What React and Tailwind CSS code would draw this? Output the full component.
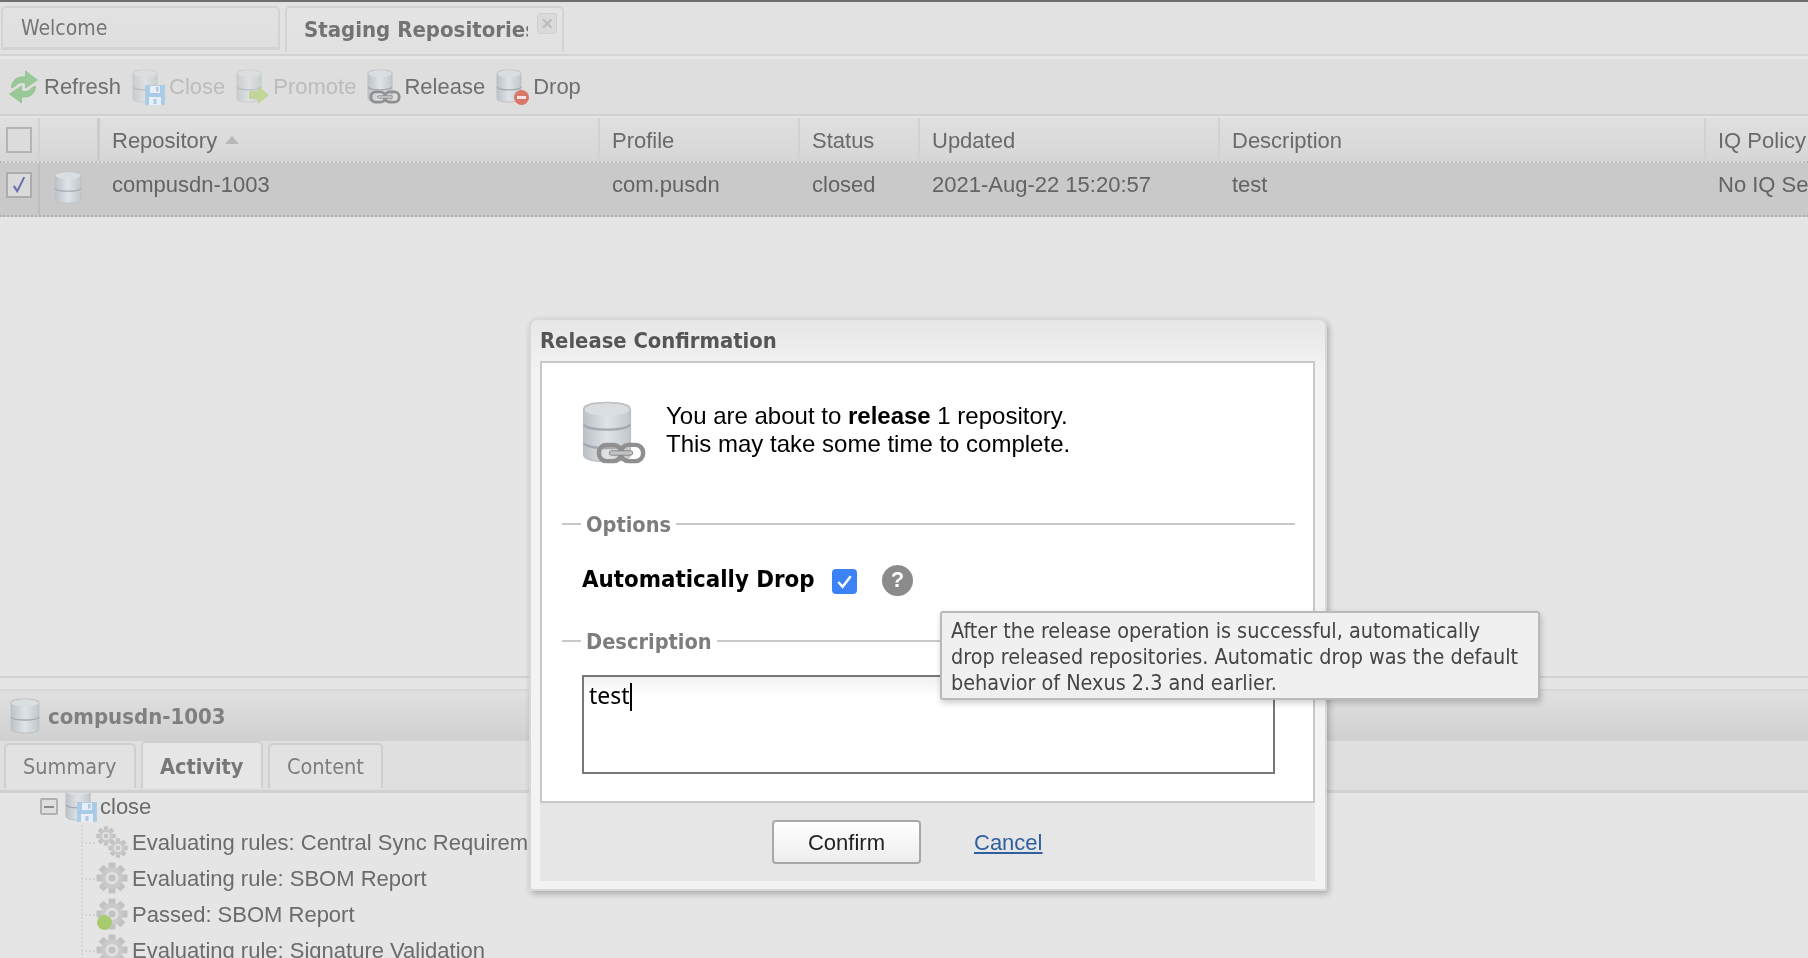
import React, { useId } from "react";

const tahoma = "font-['DejaVu_Sans',sans-serif] font-stretch-condensed";

function Db({ tiers = 2, className = "", opacity = 1 }) {
  const id = useId();
  const h = 32 / tiers;
  return (
    <svg viewBox="0 0 28 36" className={className} opacity={opacity} preserveAspectRatio="none">
      <defs>
        <linearGradient id={id} x1="0" x2="1" y1="0" y2="0">
          <stop offset="0" stopColor="#bcc2c8" />
          <stop offset="0.5" stopColor="#dfe3e6" />
          <stop offset="1" stopColor="#c1c7cc" />
        </linearGradient>
      </defs>
      <path d="M1 5C1 2 7 1 14 1s13 1 13 4v26c0 3-6 4-13 4S1 34 1 31Z" fill={`url(#${id})`} stroke="#bcc1c5" strokeWidth="1" />
      <ellipse cx="14" cy="5" rx="12.5" ry="3.6" fill="#dadee1" />
      {Array.from({ length: tiers - 1 }).map((_, i) => (
        <path key={i} d={`M1 ${3 + h * (i + 1)}c2 4 24 4 26 0`} fill="none" stroke="#a3a9af" strokeWidth="1.3" />
      ))}
    </svg>
  );
}

function Chain({ className = "" }) {
  return (
    <svg viewBox="0 0 34 16" className={className}>
      <rect x="2" y="2.5" width="15" height="11" rx="5" fill="none" stroke="#8f8f8f" strokeWidth="3" />
      <rect x="17" y="2.5" width="15" height="11" rx="5" fill="none" stroke="#8f8f8f" strokeWidth="3" />
      <rect x="9" y="6.5" width="16" height="3" rx="1.5" fill="#c4c4c4" stroke="#7f7f7f" strokeWidth="0.6" />
    </svg>
  );
}

function Floppy({ className = "" }) {
  return (
    <svg viewBox="0 0 20 20" className={className}>
      <rect x="0.5" y="0.5" width="19" height="19" fill="#a8cbe8" stroke="#b2cce0" />
      <rect x="5" y="1" width="10" height="7" fill="#e8eef3" />
      <rect x="11" y="2" width="2.5" height="4.5" fill="#a8cbe8" />
      <rect x="4" y="12" width="12" height="8" fill="#e8eef3" />
      <rect x="8.5" y="14" width="3" height="5" fill="#a8cbe8" />
    </svg>
  );
}

function Refresh({ className = "" }) {
  return (
    <svg viewBox="0 0 32 36" className={className}>
      <g fill="#98c997" stroke="#86b985" strokeWidth="0.6">
        <path d="M4 19C4 11 10 7 18 8V2l12 9-12 8v-5c-5-1-8 0-10 3Z" />
        <path d="M28 17c0 8-6 12-14 11v6L2 25l12-8v5c5 1 8 0 10-3Z" />
      </g>
    </svg>
  );
}

function Gear({ className = "" }) {
  const teeth = [0, 45, 90, 135, 180, 225, 270, 315];
  return (
    <svg viewBox="0 0 32 32" className={className}>
      {teeth.map((a) => (
        <rect key={a} x="12.5" y="0.5" width="7" height="8" rx="1" fill="#c2c2c2" transform={`rotate(${a} 16 16)`} />
      ))}
      <circle cx="16" cy="16" r="11" fill="#c9c9c9" />
      <circle cx="16" cy="16" r="6.5" fill="#e0e0e0" />
      <circle cx="16" cy="16" r="3.5" fill="#c2c2c2" />
    </svg>
  );
}

function ToolBtn({ icon, label, disabled }) {
  return (
    <div className="flex items-center">
      <div className="relative w-[33px] h-[36px] mr-[4px] shrink-0">{icon}</div>
      <span className={disabled ? "text-[#bcbcbc]" : "text-[#6f6f6f]"}>{label}</span>
    </div>
  );
}

function HeadCell({ w, children }) {
  return (
    <div className={`${w} h-full shrink-0 flex items-center pl-[12px] pt-[1px] border-r-2 border-[#d2d2d2] whitespace-nowrap overflow-hidden`}>
      {children}
    </div>
  );
}

function RowCell({ w, children }) {
  return <div className={`${w} shrink-0 pl-[12px] pt-[5px] whitespace-nowrap overflow-hidden`}>{children}</div>;
}

function Legend({ label, className = "" }) {
  return (
    <div className={`flex items-start h-[28px] ${className}`}>
      <div className="w-[19px] h-[2px] bg-[#c9c9c9] mt-[12px]" />
      <span className={`${tahoma} font-bold text-[21.6px] leading-[28px] text-[#7d7d7d] pl-[5px] pr-[5px]`}>{label}</span>
      <div className="flex-1 h-[2px] bg-[#c9c9c9] mt-[12px]" />
    </div>
  );
}

function TreeRow({ icon, children }) {
  return (
    <div className="flex items-center h-[36px] pl-[96px] relative">
      <div className="absolute left-[81px] top-1/2 w-[14px] border-t-2 border-dotted border-[#d4d4d4]" />
      <div className="w-[32px] h-[32px] shrink-0 mr-[4px] relative">{icon}</div>
      <span className="whitespace-nowrap">{children}</span>
    </div>
  );
}

export default function App() {
  return (
    <div className="relative w-[1808px] h-[958px] overflow-hidden bg-[#e5e5e5] font-['Liberation_Sans',Arial,sans-serif] text-[22px] text-[#6a6a6a]">
      <div className="blur-[0.4px]">
        <div className="h-[2px] bg-[#6e6e6e]" />

        {/* tab strip */}
        <div className="h-[54px] bg-[#e2e2e2] flex items-start pt-[4px] pl-[1px] gap-[5px] border-b-2 border-[#d4d4d4]">
          <div className={`w-[279px] h-[44px] flex items-center border-2 border-b-[3px] border-[#d3d3d3] rounded-t-[5px] bg-gradient-to-b from-[#e2e2e2] to-[#dfdfdf] pl-[18px] pt-[3px] text-[21px] text-[#757575] ${tahoma}`}>
            Welcome
          </div>
          <div className="relative w-[279px] h-[46px] flex items-center border-2 border-b-0 border-[#d3d3d3] rounded-t-[5px] bg-gradient-to-b from-[#e4e4e4] to-[#e1e1e1] pl-[17px] pb-[2px] overflow-hidden">
            <div className={`w-[224px] overflow-hidden whitespace-nowrap text-[22px] font-bold text-[#737373] ${tahoma}`}>Staging Repositories</div>
            <div className="absolute right-[5px] top-[5px] w-[20px] h-[21px] rounded-[3px] border border-[#cfcfcf] bg-[#dadada] flex items-center justify-center text-[15px] font-bold leading-none text-[#bdbdbd]">
              ✕
            </div>
          </div>
        </div>

        {/* toolbar */}
        <div className="mt-[2px] h-[58px] bg-[#dedede] border-t border-[#ececec] border-b-2 border-b-[#d0d0d0] flex items-center pl-[7px] gap-[11px]">
          <ToolBtn icon={<Refresh className="w-[33px] h-[36px]" />} label="Refresh" />
          <ToolBtn
            icon={<>
              <Db className="w-[26px] h-[34px]" opacity={0.6} />
              <Floppy className="absolute right-0 bottom-0 w-[20px] h-[20px]" />
            </>}
            label="Close"
            disabled
          />
          <ToolBtn
            icon={<>
              <Db className="w-[26px] h-[34px]" opacity={0.6} />
              <svg viewBox="0 0 20 18" className="absolute right-0 bottom-[1px] w-[20px] h-[18px]"><path d="M0 5h9V0l11 9-11 9v-5H0Z" fill="#c2d498" /></svg>
            </>}
            label="Promote"
            disabled
          />
          <ToolBtn
            icon={<>
              <Db className="w-[26px] h-[34px]" />
              <Chain className="absolute -right-[1px] bottom-0 w-[32px] h-[16px]" />
            </>}
            label="Release"
          />
          <ToolBtn
            icon={<>
              <Db className="w-[26px] h-[34px]" />
              <span className="absolute right-0 bottom-0 w-[15px] h-[15px] rounded-full bg-[#d9786a] flex items-center justify-center">
                <span className="w-[9px] h-[3px] bg-[#f2e4e2]" />
              </span>
            </>}
            label="Drop"
          />
        </div>

        {/* grid head */}
        <div className="mt-[2px] h-[45px] flex bg-gradient-to-b from-[#e0e0e0] to-[#d6d6d6] border-b-2 border-dotted border-[#bdbdbd]">
          <div className="w-[40px] h-full shrink-0 border-r-2 border-[#d2d2d2] flex items-center pl-[6px]">
            <div className="w-[26px] h-[26px] border-2 border-[#b4b4b4] bg-[#dcdcdc]" />
          </div>
          <div className="w-[60px] h-full shrink-0 border-r-[3px] border-[#cbcbcb]" />
          <HeadCell w="w-[500px]">
            Repository
            <svg viewBox="0 0 14 8" className="w-[14px] h-[8px] ml-[8px]"><path d="M7 0l7 8H0Z" fill="#b7b7b7" /></svg>
          </HeadCell>
          <HeadCell w="w-[200px]">Profile</HeadCell>
          <HeadCell w="w-[120px]">Status</HeadCell>
          <HeadCell w="w-[300px]">Updated</HeadCell>
          <HeadCell w="w-[486px]">Description</HeadCell>
          <div className="flex-1 h-full flex items-center pl-[12px] pt-[1px] whitespace-nowrap">IQ Policy</div>
        </div>

        {/* grid row */}
        <div className="h-[54px] flex bg-[#c9c9c9] border-b-2 border-dotted border-[#b2b2b2] text-[#636363]">
          <div className="w-[40px] shrink-0 border-r-2 border-[#bdbdbd] pl-[6px] pt-[9px]">
            <div className="w-[26px] h-[26px] border-2 border-[#acacac] bg-[#dadada] flex items-center justify-center">
              <svg viewBox="0 0 16 20" className="w-[14px] h-[18px]"><path d="M2 11l4 6L14 1" fill="none" stroke="#6a72ad" strokeWidth="2.4" /></svg>
            </div>
          </div>
          <div className="w-[60px] shrink-0 pl-[14px] pt-[8px]">
            <Db className="w-[28px] h-[33px]" />
          </div>
          <RowCell w="w-[500px]">compusdn-1003</RowCell>
          <RowCell w="w-[200px]">com.pusdn</RowCell>
          <RowCell w="w-[120px]">closed</RowCell>
          <RowCell w="w-[300px]">2021-Aug-22 15:20:57</RowCell>
          <RowCell w="w-[486px]">test</RowCell>
          <div className="flex-1 pl-[12px] pt-[5px] whitespace-nowrap overflow-hidden">No IQ Se</div>
        </div>

        {/* empty grid body */}
        <div className="h-[461px] border-b-2 border-[#d2d2d2]" />

        {/* detail panel */}
        <div className="mt-[11px] border-t-2 border-[#d6d6d6] h-[52px] bg-gradient-to-b from-[#e0e0e0] to-[#d0d0d0] flex items-center pl-[10px]">
          <Db className="w-[30px] h-[36px]" />
          <span className={`${tahoma} font-bold text-[22px] text-[#808080] ml-[8px]`}>compusdn-1003</span>
        </div>
        <div className="h-[52px] bg-[#dfdfdf] border-b-[3px] border-[#d1d1d1] flex items-end pl-[4px] pb-[2px] gap-[5px] text-[21.5px] text-[#7d7d7d]">
          <div className={`${tahoma} w-[132px] h-[45px] border-2 border-b-0 border-[#cfcfcf] rounded-t-[5px] bg-[#e2e2e2] pl-[17px] pt-[6px]`}>Summary</div>
          <div className={`${tahoma} w-[122px] h-[47px] border-2 border-b-0 border-[#cfcfcf] rounded-t-[5px] bg-[#e6e6e6] pl-[17px] pt-[8px] font-bold text-[#777777]`}>Activity</div>
          <div className={`${tahoma} w-[115px] h-[45px] border-2 border-b-0 border-[#cfcfcf] rounded-t-[5px] bg-[#e2e2e2] pl-[17px] pt-[6px]`}>Content</div>
        </div>

        {/* tree */}
        <div className="relative h-[170px] overflow-hidden text-[#6b6b6b]">
          <div className="absolute left-[81px] top-[32px] bottom-0 border-l-2 border-dotted border-[#d4d4d4]" />
          <div className="flex items-center h-[27px] pl-[40px]">
            <div className="w-[18px] h-[17px] border-2 border-[#b0b0b0] rounded-[2px] bg-[#dedede] flex items-center justify-center shrink-0">
              <span className="w-[10px] h-[2px] bg-[#8a8a8a]" />
            </div>
            <div className="relative w-[32px] h-[28px] ml-[7px] mr-[3px] shrink-0">
              <Db className="w-[26px] h-[34px] -mt-[6px]" />
              <Floppy className="absolute right-0 bottom-[-2px] w-[20px] h-[22px]" />
            </div>
            close
          </div>
          <div className="h-[4px]" />
          <TreeRow
            icon={<>
              <Gear className="absolute left-0 top-0 w-[20px] h-[20px]" />
              <Gear className="absolute right-0 bottom-0 w-[20px] h-[20px]" />
            </>}
          >
            Evaluating rules: Central Sync Requirements
          </TreeRow>
          <TreeRow icon={<Gear className="w-[32px] h-[32px]" />}>Evaluating rule: SBOM Report</TreeRow>
          <TreeRow
            icon={<>
              <Gear className="w-[32px] h-[32px]" />
              <span className="absolute left-[1px] bottom-0 w-[15px] h-[15px] rounded-full bg-[#a8cb70]" />
            </>}
          >
            Passed: SBOM Report
          </TreeRow>
          <TreeRow icon={<Gear className="w-[32px] h-[32px]" />}>Evaluating rule: Signature Validation</TreeRow>
        </div>
      </div>

      {/* dialog */}
      <div className="absolute left-[529px] top-[318px] w-[798px] h-[573px] rounded-t-[8px] rounded-b-[3px] bg-gradient-to-b from-[#e6e6e6] via-[#f3f3f3] via-[9%] to-[#f3f3f3] border-2 border-[#d8d8d8] shadow-[2px_3px_6px_rgba(0,0,0,0.25)] pl-[9px] pr-[10px] flex flex-col">
        <div className={`${tahoma} h-[41px] shrink-0 flex items-center font-bold text-[21.8px] text-[#555555] pt-[1px]`}>
          Release Confirmation
        </div>
        <div className="h-[442px] shrink-0 bg-white border-2 border-[#c8c8c8] pl-[40px] pr-[18px] text-black">
          <div className="flex pt-[38px] h-[148px]">
            <div className="relative w-[84px] h-[64px] shrink-0">
              <Db tiers={3} className="w-[50px] h-[62px]" />
              <Chain className="absolute left-[14px] bottom-0 w-[50px] h-[24px]" />
            </div>
            <div className="text-[24px] leading-[28px] pt-[1px]">
              You are about to <b>release</b> 1 repository.
              <br />
              This may take some time to complete.
            </div>
          </div>
          <Legend label="Options" className="-ml-[20px]" />
          <div className="flex items-center h-[60px] mt-[11px]">
            <span className={`${tahoma} font-bold text-[23.8px] w-[250px] shrink-0`}>Automatically Drop</span>
            <div className="w-[25px] h-[25px] rounded-[4px] bg-[#3b82f6] flex items-center justify-center mt-[3px]">
              <svg viewBox="0 0 20 20" className="w-[19px] h-[19px]"><path d="M3.5 10.5l4.5 5 8.5-11" fill="none" stroke="white" strokeWidth="2.6" /></svg>
            </div>
            <div className="w-[31px] h-[31px] rounded-full bg-[#8b8b8b] ml-[25px] flex items-center justify-center text-white font-bold text-[22px] leading-none">?</div>
          </div>
          <Legend label="Description" className="mt-[18px] -ml-[20px]" />
          <div className="relative mt-[19px] w-[693px] h-[99px] border-2 border-[#777777] bg-gradient-to-b from-[#f0f0f0] to-white bg-[length:100%_18px] bg-no-repeat pl-[5px] pt-[3px]">
            <span className="font-['Noto_Sans',sans-serif] text-[23px] leading-[30px]">test</span>
            <span className="inline-block w-[2px] h-[28px] bg-black align-middle -mt-[2px]" />
          </div>
        </div>
        <div className="h-[78px] shrink-0 bg-[#e6e6e6] flex items-center pl-[232px]">
          <div className="w-[149px] h-[44px] rounded-[4px] border-2 border-[#a8a8a8] bg-gradient-to-b from-white to-[#ededed] flex items-center justify-center text-[#222222]">
            Confirm
          </div>
          <span className="ml-[53px] text-[#2f5f9e] underline">Cancel</span>
        </div>
      </div>

      {/* tooltip */}
      <div className={`absolute left-[940px] top-[611px] w-[600px] h-[89px] bg-[#f0f0f0] border-2 border-[#b9b9b9] rounded-[3px] shadow-[1px_3px_6px_rgba(0,0,0,0.2)] pl-[9px] pt-[5px] text-[21.4px] leading-[26px] text-[#444444] ${tahoma}`}>
        <div className="whitespace-nowrap">After the release operation is successful, automatically</div>
        <div className="whitespace-nowrap">drop released repositories. Automatic drop was the default</div>
        <div className="whitespace-nowrap">behavior of Nexus 2.3 and earlier.</div>
      </div>
    </div>
  );
}
